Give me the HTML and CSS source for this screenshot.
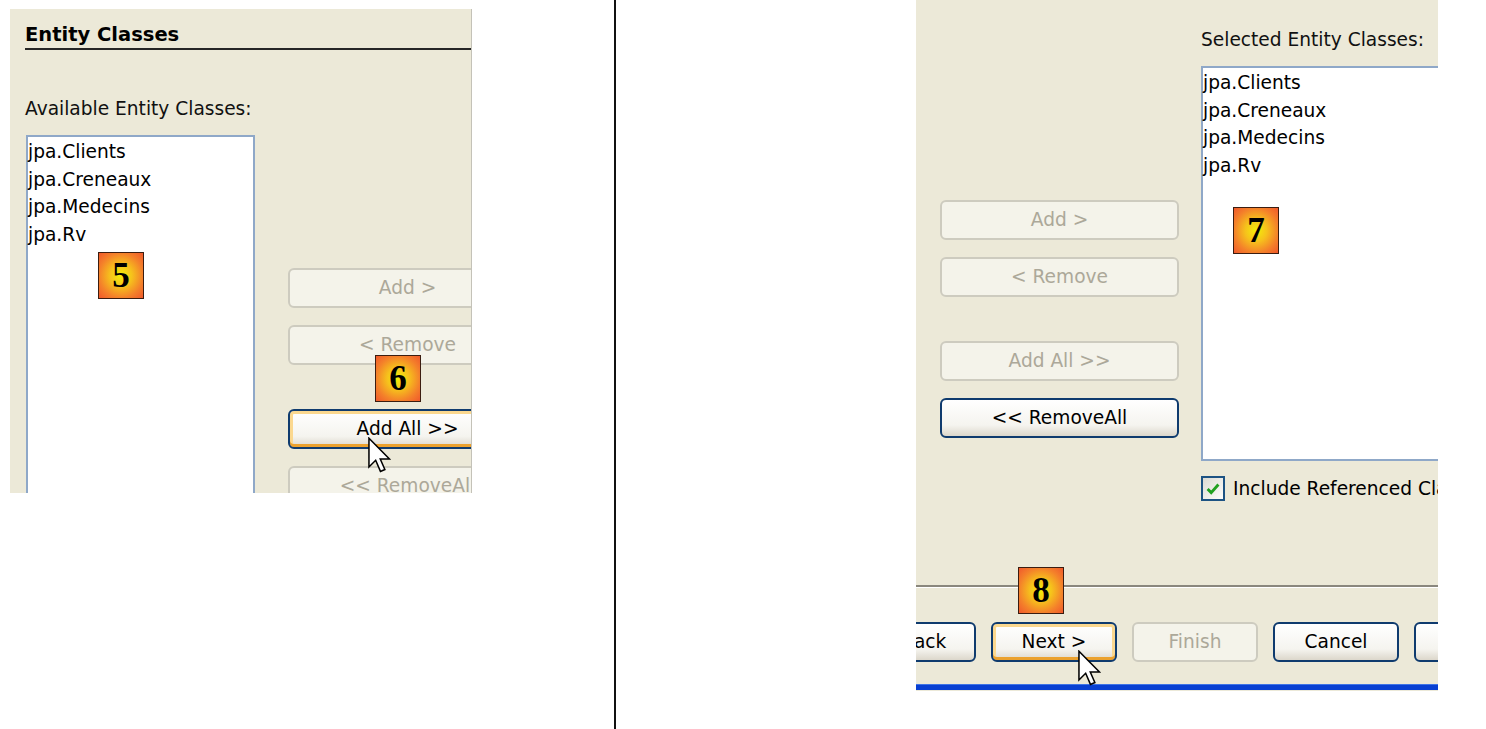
FILE: index.html
```html
<!DOCTYPE html>
<html>
    <head>
        <title>Entity Classes</title>
        <meta charset="UTF-8">
        <link rel="stylesheet" href="styles.css">
    </head>
    <body>
        <!-- first capture: available classes -->
        <div class="shot shot-left">
            <div class="heading">Entity Classes</div>
            <div class="field-label">Available Entity Classes:</div>

            <div class="picker">
                <div class="listbox listbox-left">
                    <div class="item">jpa.Clients</div>
                    <div class="item">jpa.Creneaux</div>
                    <div class="item">jpa.Medecins</div>
                    <div class="item">jpa.Rv</div>
                </div>
                <div class="button-col button-col-left">
                    <div class="btn disabled">Add &gt;</div>
                    <div class="btn disabled">&lt; Remove</div>
                    <div class="btn focused gap-big">Add All &gt;&gt;</div>
                    <div class="btn disabled">&lt;&lt; RemoveAll</div>
                </div>
            </div>

            <div class="badge badge-5">5</div>
            <div class="badge badge-6">6</div>
            <svg class="cursor cursor-left" viewBox="0 0 12 19" width="23" height="37">
                <path d="M0.5 0.5 L0.5 15.5 L4 12 L6.5 17.8 L8.8 16.8 L6.4 11.3 L11.2 11.3 Z" fill="#fff" stroke="#000" stroke-width="0.8" stroke-linejoin="miter"/>
            </svg>
        </div>

        <div class="divider"></div>

        <!-- second capture: selected classes -->
        <div class="shot shot-right">
            <div class="picker picker-right">
                <div class="button-col button-col-right">
                    <div class="btn disabled">Add &gt;</div>
                    <div class="btn disabled">&lt; Remove</div>
                    <div class="btn disabled gap-big">Add All &gt;&gt;</div>
                    <div class="btn">&lt;&lt; RemoveAll</div>
                </div>
                <div class="selected-col">
                    <div class="field-label">Selected Entity Classes:</div>
                    <div class="listbox listbox-right">
                        <div class="item">jpa.Clients</div>
                        <div class="item">jpa.Creneaux</div>
                        <div class="item">jpa.Medecins</div>
                        <div class="item">jpa.Rv</div>
                    </div>
                    <div class="check-row">
                        <span class="checkbox">
                            <svg viewBox="0 0 20 20" width="18" height="18">
                                <path d="M4 10 L8 14 L16 5" fill="none" stroke="#21a121" stroke-width="3.2"/>
                            </svg>
                        </span>
                        <span class="check-label">Include Referenced Classes</span>
                    </div>
                </div>
            </div>

            <div class="separator"></div>

            <div class="footer">
                <div class="btn wide back">&lt; Back</div>
                <div class="btn wide focused">Next &gt;</div>
                <div class="btn wide disabled">Finish</div>
                <div class="btn wide">Cancel</div>
                <div class="btn wide">Help</div>
            </div>

            <div class="frame-bottom"></div>

            <div class="badge badge-7">7</div>
            <div class="badge badge-8">8</div>
            <svg class="cursor cursor-right" viewBox="0 0 12 19" width="23" height="37">
                <path d="M0.5 0.5 L0.5 15.5 L4 12 L6.5 17.8 L8.8 16.8 L6.4 11.3 L11.2 11.3 Z" fill="#fff" stroke="#000" stroke-width="0.8" stroke-linejoin="miter"/>
            </svg>
        </div>
    </body>
</html>
```

FILE: styles.css
```css
body {
    margin: 0;
    height: 729px;
    overflow: hidden;
    background: #fff;
    display: flex;
    align-items: flex-start;
    font-family: "DejaVu Sans", sans-serif;
    font-size: 18.6px;
    color: #000;
}

.shot {
    position: relative;
    overflow: hidden;
    background: #ece9d8;
    flex-shrink: 0;
}

.shot-left {
    margin: 9px 0 0 10px;
    width: 461px;
    height: 484px;
    border-right: 1px solid #c4c2b8;
}

.divider {
    flex-shrink: 0;
    width: 2px;
    height: 729px;
    margin-left: 142px;
    background: #111;
}

.shot-right {
    margin-left: 300px;
    width: 522px;
    height: 691px;
    display: flex;
    flex-direction: column;
}

/* header */
.heading {
    margin-left: 15px;
    padding-top: 14px;
    line-height: 24px;
    font-weight: bold;
    font-size: 19.5px;
    border-bottom: 2px solid #262626;
    padding-bottom: 1px;
}

.field-label {
    line-height: 24px;
    color: #111;
}

.shot-left .field-label {
    margin: 47px 0 0 15px;
}

/* list + buttons */
.picker {
    display: flex;
    align-items: flex-start;
}

.shot-left .picker {
    margin: 14px 0 0 16px;
}

.listbox {
    background: #fff;
    border: 2px solid #8fa8c8;
    padding-top: 1px;
    box-sizing: border-box;
}

.listbox-left {
    width: 229px;
    height: 420px;
    flex-shrink: 0;
}

.listbox-right {
    width: 260px;
    height: 395px;
    margin-top: 14px;
    border-right: none;
}

.item {
    line-height: 27.5px;
}

.button-col {
    display: flex;
    flex-direction: column;
    gap: 17px;
    flex-shrink: 0;
}

.button-col-left {
    margin-left: 33px;
    padding-top: 133px;
}

.button-col-right {
    padding-top: 200px;
}

.picker-right {
    padding-left: 24px;
    height: 585px;
}

.selected-col {
    margin-left: 22px;
    padding-top: 28px;
    flex-shrink: 0;
}

.btn {
    width: 239px;
    height: 40px;
    box-sizing: border-box;
    border: 2px solid #0f3b6e;
    border-radius: 6px;
    background: linear-gradient(#ffffff, #f5f4ef 70%, #dcd7cb);
    text-align: center;
    line-height: 35px;
    color: #000;
    flex-shrink: 0;
}

.btn.gap-big {
    margin-top: 27px;
}

.btn.disabled {
    border-color: #cdcbbf;
    background: #f4f3ea;
    color: #aca899;
}

.btn.focused {
    box-shadow: inset 0 -3px 0 #eba12e, inset 0 0 0 3px #fbd88f;
}

/* checkbox */
.check-row {
    display: flex;
    align-items: center;
    margin-top: 15px;
    white-space: nowrap;
}

.checkbox {
    width: 24px;
    height: 25px;
    box-sizing: border-box;
    border: 2px solid #1d5383;
    background: linear-gradient(135deg, #dcdbd3, #fdfdfb);
    display: flex;
    align-items: center;
    justify-content: center;
}

.check-label {
    margin-left: 8px;
}

/* footer */
.separator {
    height: 2px;
    background: #8a877d;
    border-bottom: 1px solid #fff;
}

.footer {
    display: flex;
    gap: 15px;
    margin-top: 34px;
}

.btn.wide {
    width: 126px;
}

.btn.back {
    margin-left: -66px;
}

.frame-bottom {
    margin-top: 22px;
    height: 5px;
    background: #0840d2;
    border-top: 1px solid #3f74e6;
}

/* callout badges and pointers */
.badge {
    position: absolute;
    width: 44px;
    height: 45px;
    border: 1px solid #3b1d10;
    background: radial-gradient(ellipse at 50% 50%, #f3ef08 0%, #f6c11c 35%, #f4812a 70%, #f0582c 100%);
    font-family: "Liberation Serif", serif;
    font-weight: bold;
    font-size: 35px;
    line-height: 45px;
    text-align: center;
    color: #000;
}

.badge-5 { left: 88px; top: 243px; }
.badge-6 { left: 365px; top: 346px; }
.badge-7 { left: 317px; top: 207px; }
.badge-8 { left: 102px; top: 567px; }

.cursor {
    position: absolute;
}

.cursor-left { left: 358px; top: 428px; }
.cursor-right { left: 162px; top: 650px; }
```
